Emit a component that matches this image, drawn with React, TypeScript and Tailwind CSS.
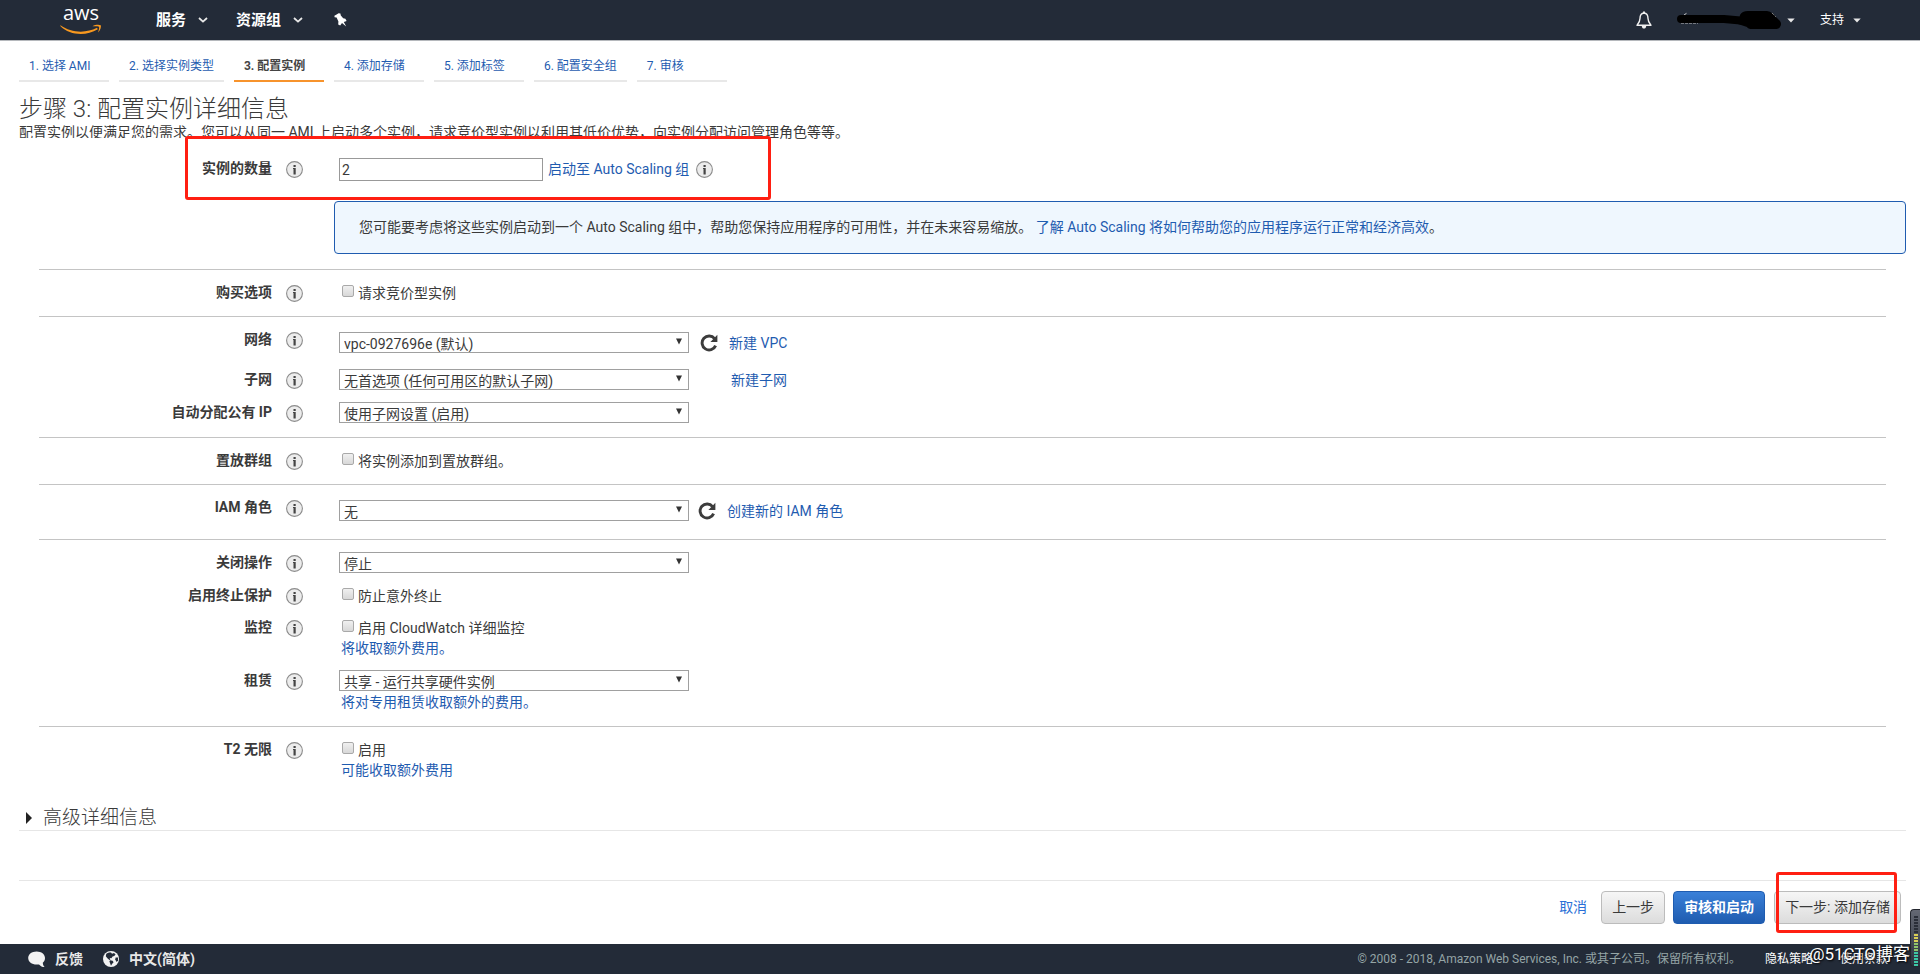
import { useState } from "react";
import type { ReactNode } from "react";

const STEPS = ["1. 选择 AMI", "2. 选择实例类型", "3. 配置实例", "4. 添加存储", "5. 添加标签", "6. 配置安全组", "7. 审核"];

function AwsLogo() {
  return (
    <span className="flex w-[42px] flex-col items-center pt-[2px] text-white">
      <span className="h-4 font-['Open_Sans',sans-serif] text-[20px] leading-[10px] font-medium">aws</span>
      <svg viewBox="0 0 42 11" className="h-[11px] w-[42px]" aria-hidden="true">
        <path d="M0.5 1.2 C11 9 26 9.5 37 3.8 L37.8 5.2 C26 12.5 10 11.5 0.3 2 Z" fill="#f7981f" />
        <path d="M32.5 2.2 C35 0.6 39 0.3 40.8 1.2 C41.4 3 40.3 6.5 38 8.6 C38.6 6.5 39.6 3.8 39 2.8 C38 2 35 2.3 32.5 2.2 Z" fill="#f7981f" />
      </svg>
    </span>
  );
}

function Chevron() {
  return (
    <svg viewBox="0 0 10 6" className="h-[6px] w-[10px]" aria-hidden="true">
      <path d="M1 1 L5 4.6 L9 1" fill="none" stroke="#e8e8e8" strokeWidth="1.8" />
    </svg>
  );
}

function Caret() {
  return (
    <svg viewBox="0 0 8 5" className="h-[5px] w-[8px]" aria-hidden="true">
      <path d="M0.3 0.5 H7.7 L4 4.6 Z" fill="#e8e8e8" />
    </svg>
  );
}

function Pin() {
  return (
    <svg viewBox="0 0 13 14" className="h-[14px] w-[13px]" aria-hidden="true">
      <path d="M2.6 1.6 L4.6 0.2 L6.4 0.6 L6.8 2.4 L9.2 5.2 L11.4 5.8 L12.6 8 L9.8 9 L12.2 13.6 L8 10 L6.2 12.6 L4.2 11.4 L4.4 8.4 L2.6 4.6 L0.6 4.2 L0.4 2.8 Z" fill="#fff" />
    </svg>
  );
}

function Bell() {
  return (
    <svg viewBox="0 0 16 18" className="h-[18px] w-4" aria-hidden="true">
      <path d="M8 2 C4.6 2.2 4 5 4 7.6 C4 11 2.6 12.4 1 14.2 H15 C13.4 12.4 12 11 12 7.6 C12 5 11.4 2.2 8 2 Z" fill="none" stroke="#f0f0f0" strokeWidth="1.4" strokeLinejoin="round" />
      <path d="M7 0.4 H9 V2.4 H7 Z M5.8 15 H10.2 C10.2 16.6 9.2 17.6 8 17.6 C6.8 17.6 5.8 16.6 5.8 15 Z" fill="#f0f0f0" />
    </svg>
  );
}

function Globe() {
  return (
    <svg viewBox="0 0 16 16" className="h-4 w-4" aria-hidden="true">
      <circle cx="8" cy="8" r="8" fill="#f3f3f3" />
      <path d="M3.2 3 C4.6 1.6 6.6 1.2 8 1.6 L9 2.8 L11 2 L12.6 3.4 L11.2 5 L9.6 5.4 L8.4 7.2 L6.6 7 L7.4 8.6 L6.4 9 L4.4 7.2 L2.8 5.2 Z" fill="#232b38" />
      <path d="M7 9.2 L9.6 9.8 L10.6 11.2 L9 13 L8 14.8 L7.2 12.4 L6.4 10.6 Z" fill="#232b38" />
      <path d="M12.6 6.4 L15 6.6 L15 9.6 L13.6 11 L12.2 8.6 Z" fill="#232b38" />
    </svg>
  );
}

function Info() {
  return (
    <svg viewBox="0 0 17 17" className="h-[17px] w-[17px] shrink-0" aria-hidden="true">
      <circle cx="8.5" cy="8.5" r="7.9" fill="#ececec" stroke="#8c8c8c" strokeWidth="1.1" />
      <path d="M7.5 4 H9.7 V6 H7.5 Z M7 7 H9.7 V13.6 H7.5 V8 H7 Z" fill="#444" />
    </svg>
  );
}

function Refresh() {
  return (
    <svg viewBox="0 0 18 18" className="h-[18px] w-[18px]" aria-hidden="true">
      <path d="M14.6 4.6 A7 7 0 1 0 15.6 11.6" fill="none" stroke="#3c3c3c" strokeWidth="2.9" />
      <path d="M17.4 0.8 V8 H10.4 Z" fill="#3c3c3c" />
    </svg>
  );
}

function Link({ children }: { children: ReactNode }) {
  return <a href="#" className="text-[#1f5cb0]">{children}</a>;
}

function Row({ label, htmlFor, children }: { label: string; htmlFor: string; children: ReactNode }) {
  return (
    <div className="flex items-start">
      <label htmlFor={htmlFor} className="w-[253px] shrink-0 text-right leading-5 font-bold">{label}</label>
      <button type="button" aria-label={label + " 说明"} className="mt-[3px] mr-9 ml-[14px]"><Info /></button>
      <div className="min-w-0 flex-1">{children}</div>
    </div>
  );
}

function Select({ id, value }: { id: string; value: string }) {
  return (
    <div className="relative w-[350px]">
      <select id={id} className="block h-[21px] w-full appearance-none border border-[#a0a0a0] bg-white pt-[2px] pl-1 text-[14px] leading-[18px]">
        <option>{value}</option>
      </select>
      <svg viewBox="0 0 6 7" className="pointer-events-none absolute top-[6px] right-[7px] h-[7px] w-[6px]" aria-hidden="true">
        <path d="M0 0.5 H6 L3 6.5 Z" fill="#333" />
      </svg>
    </div>
  );
}

function Check({ id, text }: { id: string; text: string }) {
  return (
    <div className="flex h-5 items-start pt-px pl-[3px]">
      <input
        id={id}
        type="checkbox"
        className="mt-[2px] mr-1 h-3 w-3 appearance-none rounded-[2px] border border-[#a9a9a9] bg-linear-to-b from-[#f0f0f0] to-[#d8d8d8] checked:bg-[#1f5cb0]"
      />
      <label htmlFor={id} className="leading-5">{text}</label>
    </div>
  );
}

function Section({ className, children }: { className: string; children: ReactNode }) {
  return (
    <section className={"mr-5 ml-5 border-t border-[#c4c4c4] pt-3 " + className}>
      <div className="-ml-5 flex flex-col gap-3">{children}</div>
    </section>
  );
}

function Meter() {
  const bars = Array.from({ length: 17 }, (_, i) => i);
  return (
    <div className="absolute right-0 bottom-[7px] flex h-[58px] w-[10px] flex-col items-end gap-px rounded-l-[4px] border border-r-0 border-[#23262e] bg-linear-to-b from-[#646873] to-[#2b303c] pt-[6px] pr-[2px]">
      {bars.map((i) => (
        <span key={i} className={"h-[2px] w-1 shrink-0 " + (i < 6 ? "bg-[#2a2e38]" : i < 9 ? "bg-[#d9cf55]" : i < 12 ? "bg-[#8fc46a]" : "bg-[#3cc7a4]")} />
      ))}
    </div>
  );
}

export default function App() {
  const [count, setCount] = useState("2");
  return (
    <div className="relative flex min-h-screen flex-col bg-white font-[Roboto,'Noto_Sans_CJK_SC',sans-serif] text-[14px] text-[#3a3a3a]">
      <header className="flex h-[41px] items-center border-b border-[#b5b8bc] bg-[#232b38] pl-[60px] text-white">
        <a href="#" aria-label="AWS"><AwsLogo /></a>
        <button type="button" className="ml-[54px] flex items-center gap-3 text-[15px] font-bold">服务<Chevron /></button>
        <button type="button" className="ml-7 flex items-center gap-3 text-[15px] font-bold">资源组<Chevron /></button>
        <button type="button" aria-label="固定" className="ml-[31px]"><Pin /></button>
        <div className="mr-[59px] ml-auto flex items-center text-[12px]">
          <button type="button" aria-label="通知" className="mr-6"><Bell /></button>
          <button type="button" aria-label="账户" className="flex items-center gap-[5px]">
            <svg viewBox="0 0 106 20" className="h-5 w-[106px]" aria-hidden="true">
              <path d="M8 5 L11 3 M96 3 L100 7 M5 13 H22" stroke="#c8c8c8" strokeWidth="1" strokeDasharray="3 1" />
              <path d="M5 9 H48 L70 11" fill="none" stroke="#000" strokeWidth="8" strokeLinecap="round" />
              <path d="M64 5 Q66 1 72 1 H91 Q94 1 97 4 L104 11 Q106 14 104 17 Q103 19 99 19 H76 Q72 19 71 17 L62 14 Z" fill="#000" />
            </svg>
            <Caret />
          </button>
          <button type="button" className="ml-[25px] flex items-center gap-[9px]">支持<Caret /></button>
        </div>
      </header>

      <main className="flex flex-1 flex-col pr-[14px] pl-[19px]">
        <nav className="flex gap-[10px] pt-[15px] text-[12px]">
          {STEPS.map((s, i) => (
            <a
              key={s}
              href="#"
              className={"min-w-[90px] border-b-2 px-[10px] pb-1 leading-5 " + (i === 2 ? "border-[#f7932c] font-bold text-[#444]" : "border-[#e8e8e8] text-[#1f5cb0]")}
            >
              {s}
            </a>
          ))}
        </nav>
        <h1 className="mt-[14px] text-[24px] leading-[26px] font-light">步骤 3: 配置实例详细信息</h1>
        <p className="h-4 leading-5">
          配置实例以便满足您的需求。您可以从同一 AMI 上启动多个实例，请求竞价型实例以利用其低价优势，向实例分配访问管理角色等等。
        </p>

        <form onSubmit={(e) => e.preventDefault()}>
          <div className="relative w-[752px] bg-white pt-5">
            <div className="pointer-events-none absolute -top-[2px] left-[166px] h-[64px] w-[586px] rounded-[3px] border-3 border-[#ff1f12]" />
            <Row label="实例的数量" htmlFor="count">
              <div className="flex items-center">
                <input id="count" value={count} onChange={(e) => setCount(e.target.value)} className="mr-[5px] h-[23px] w-[204px] border border-[#999] px-[2px] text-[14px]" />
                <Link>启动至 Auto Scaling 组</Link>
                <button type="button" aria-label="Auto Scaling 说明" className="ml-[7px]"><Info /></button>
              </div>
            </Row>
          </div>
          <div className="mt-5 mb-[15px] ml-[315px] rounded-[4px] border border-[#1f5cb0] bg-[#eff7fe] px-6 py-[15px] leading-[21px]">
            您可能要考虑将这些实例启动到一个 Auto Scaling 组中，帮助您保持应用程序的可用性，并在未来容易缩放。 <Link>了解 Auto Scaling 将如何帮助您的应用程序运行正常和经济高效</Link>。
          </div>

          <Section className="pb-[14px]">
            <Row label="购买选项" htmlFor="spot"><Check id="spot" text="请求竞价型实例" /></Row>
          </Section>
          <Section className="pb-[14px]">
            <Row label="网络" htmlFor="vpc">
              <div className="mb-1 flex items-end pt-[3px] leading-5">
                <Select id="vpc" value="vpc-0927696e (默认)" />
                <button type="button" aria-label="刷新网络" className="mr-[11px] ml-[11px] self-center"><Refresh /></button>
                <Link>新建 VPC</Link>
              </div>
            </Row>
            <Row label="子网" htmlFor="subnet">
              <div className="flex items-end gap-[42px] leading-5">
                <Select id="subnet" value="无首选项 (任何可用区的默认子网)" />
                <Link>新建子网</Link>
              </div>
            </Row>
            <Row label="自动分配公有 IP" htmlFor="ip"><Select id="ip" value="使用子网设置 (启用)" /></Row>
          </Section>
          <Section className="pb-[14px]">
            <Row label="置放群组" htmlFor="group"><Check id="group" text="将实例添加到置放群组。" /></Row>
          </Section>
          <Section className="pb-[18px]">
            <Row label="IAM 角色" htmlFor="iam">
              <div className="flex items-end pt-[3px] leading-5">
                <Select id="iam" value="无" />
                <button type="button" aria-label="刷新角色" className="mr-[11px] ml-[9px] self-center"><Refresh /></button>
                <Link>创建新的 IAM 角色</Link>
              </div>
            </Row>
          </Section>
          <Section className="pb-[14px]">
            <Row label="关闭操作" htmlFor="shutdown"><Select id="shutdown" value="停止" /></Row>
            <Row label="启用终止保护" htmlFor="protect"><Check id="protect" text="防止意外终止" /></Row>
            <Row label="监控" htmlFor="monitor">
              <Check id="monitor" text="启用 CloudWatch 详细监控" />
              <div className="pt-px pl-[2px] leading-5"><Link>将收取额外费用。</Link></div>
            </Row>
            <Row label="租赁" htmlFor="tenancy">
              <Select id="tenancy" value="共享 - 运行共享硬件实例" />
              <div className="pt-px pl-[2px] leading-5"><Link>将对专用租赁收取额外的费用。</Link></div>
            </Row>
          </Section>
          <Section className="pb-[26px]">
            <Row label="T2 无限" htmlFor="t2">
              <Check id="t2" text="启用" />
              <div className="pt-px pl-[2px] leading-5"><Link>可能收取额外费用</Link></div>
            </Row>
          </Section>

          <h2 className="border-b border-[#e6e6e6] pl-[7px] text-[19px] leading-6 font-light">
            <button type="button" className="flex items-center gap-[11px]">
              <svg viewBox="0 0 6 12" className="h-3 w-[6px]" aria-hidden="true"><path d="M0 0 L6 6 L0 12 Z" fill="#222" /></svg>
              高级详细信息
            </button>
          </h2>

          <div className="mt-[49px] flex items-center justify-end border-t border-[#e6e6e6] pt-[10px] pr-[5px] pb-[19px]">
            <a href="#" className="mr-[14px] text-[#2a6fd6]">取消</a>
            <button type="button" className="mr-2 h-[33px] rounded-[4px] border border-[#bcbcbc] bg-linear-to-b from-[#f6f6f6] to-[#dcdcdc] px-[10px]">上一步</button>
            <button type="button" className="mr-[9px] h-[33px] rounded-[4px] border border-[#1f5cb0] bg-linear-to-b from-[#3a80d8] to-[#1f5cb0] px-[10px] font-bold text-white">审核和启动</button>
            <div className="relative">
              <button type="submit" className="h-[33px] rounded-[4px] border border-[#bcbcbc] bg-linear-to-b from-[#f6f6f6] to-[#dcdcdc] px-[10px]">下一步: 添加存储</button>
              <div className="pointer-events-none absolute -top-[19px] right-1 -bottom-[9px] left-[2px] rounded-[3px] border-3 border-[#ff1f12]" />
            </div>
          </div>
        </form>
      </main>

      <footer className="flex h-[30px] items-center bg-[#232b38] pr-8 pl-7 text-[12px]">
        <button type="button" className="flex items-center gap-[9px] text-[14px] font-bold text-[#e8e8e8]">
          <svg viewBox="0 0 18 17" className="h-[17px] w-[18px]" aria-hidden="true">
            <path d="M8.6 0.5 C13.4 0.5 17 3.3 17 7 C17 9 16.2 10.6 14.8 11.8 C14.8 13.6 15.6 15 16.6 16 C14.4 16 12.4 15 11 13.4 C10.2 13.6 9.4 13.6 8.6 13.6 C3.8 13.6 0.2 10.8 0.2 7 C0.2 3.3 3.8 0.5 8.6 0.5 Z" fill="#f3f3f3" />
          </svg>
          反馈
        </button>
        <button type="button" className="ml-5 flex items-center gap-[10px] text-[14px] font-bold text-[#e8e8e8]"><Globe />中文(简体)</button>
        <span className="mr-6 ml-auto text-[#95a5a6]">© 2008 - 2018, Amazon Web Services, Inc. 或其子公司。保留所有权利。</span>
        <a href="#" className="mr-[27px] text-white">隐私策略</a>
        <a href="#" className="text-white">使用条款</a>
      </footer>

      <Meter />
      <div className="pointer-events-none absolute right-[10px] bottom-2 text-[17px] leading-6 text-white [text-shadow:1px_1px_2px_#000]">@51CTO博客</div>
    </div>
  );
}
